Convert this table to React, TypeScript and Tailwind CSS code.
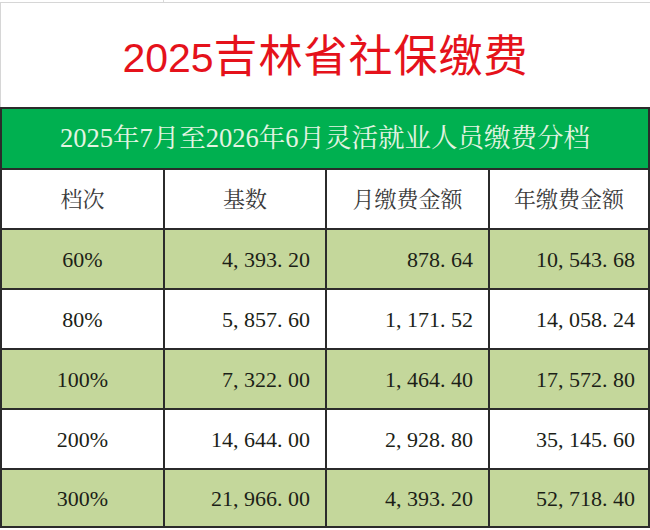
import React from 'react';

const rows = [
  { level: '60%', base: '4,393.20', month: '878.64', year: '10,543.68' },
  { level: '80%', base: '5,857.60', month: '1,171.52', year: '14,058.24' },
  { level: '100%', base: '7,322.00', month: '1,464.40', year: '17,572.80' },
  { level: '200%', base: '14,644.00', month: '2,928.80', year: '35,145.60' },
  { level: '300%', base: '21,966.00', month: '4,393.20', year: '52,718.40' },
];

const serif = { fontFamily: '"Liberation Serif", "Noto Serif CJK SC", "Noto Sans CJK SC", serif' };

// SimSun-style half-width punctuation: comma and dot take a full digit cell
function Num({ value }: { value: string }) {
  return (
    <span className="whitespace-nowrap">
      {value.split('').map((ch, i) =>
        ch === ',' || ch === '.' ? (
          <span key={i} className="inline-block w-[11px] text-left">
            {ch}
          </span>
        ) : (
          <span key={i}>{ch}</span>
        )
      )}
    </span>
  );
}

export default function App() {
  return (
    <div className="w-[650px] h-[530px] bg-white overflow-hidden relative" style={serif}>
      {/* spreadsheet gridline above the title */}
      <div className="h-[2px] relative">
        <div className="absolute left-[163px] top-0 h-[2px] w-px bg-[#d9d9d9]" />
      </div>
      <div className="h-[105px] border-t border-l border-[#d6d6d6] flex items-center justify-center">
        <h1
          className="text-[#e5121b] text-[44px] leading-none flex items-baseline"
          style={{ fontFamily: '"Noto Sans CJK SC", sans-serif' }}
        >
          <span className="text-[41px]" style={{ fontFamily: '"Liberation Sans", sans-serif' }}>
            2025
          </span>
          <span className="tracking-[1px]">吉林省社保缴费</span>
        </h1>
      </div>

      <div className="border-x-2 border-b-2 border-[#2b2b2b] w-[650px]">
        <div className="h-[61px] border-t-2 border-[#2b2b2b] bg-[#00b050] flex items-center justify-center text-[26.5px] text-[#e3f4e2] leading-none">
          2025年7月至2026年6月灵活就业人员缴费分档
        </div>

        <div className="grid grid-cols-[161px_162px_163px_1fr] h-[60px] border-t-2 border-[#2b2b2b] text-[22px] text-[#3a3a3a]">
          <div className="flex items-center justify-center">档次</div>
          <div className="flex items-center justify-center border-l-2 border-[#2b2b2b]">基数</div>
          <div className="flex items-center justify-center border-l-2 border-[#2b2b2b]">月缴费金额</div>
          <div className="flex items-center justify-center border-l-2 border-[#2b2b2b]">年缴费金额</div>
        </div>

        {rows.map((r, i) => (
          <div
            key={r.level}
            className={`grid grid-cols-[161px_162px_163px_1fr] border-t-2 border-[#2b2b2b] text-[22px] text-[#1c1f17] ${
              i === rows.length - 1 ? 'h-[58px]' : 'h-[60px]'
            } ${i % 2 === 0 ? 'bg-[#c4d79b]' : 'bg-white'}`}
          >
            <div className="flex items-center justify-center">{r.level}</div>
            <div className="flex items-center justify-end pr-[15px] border-l-2 border-[#2b2b2b]">
              <Num value={r.base} />
            </div>
            <div className="flex items-center justify-end pr-[15px] border-l-2 border-[#2b2b2b]">
              <Num value={r.month} />
            </div>
            <div className="flex items-center justify-end pr-[13px] border-l-2 border-[#2b2b2b]">
              <Num value={r.year} />
            </div>
          </div>
        ))}
      </div>
    </div>
  );
}
